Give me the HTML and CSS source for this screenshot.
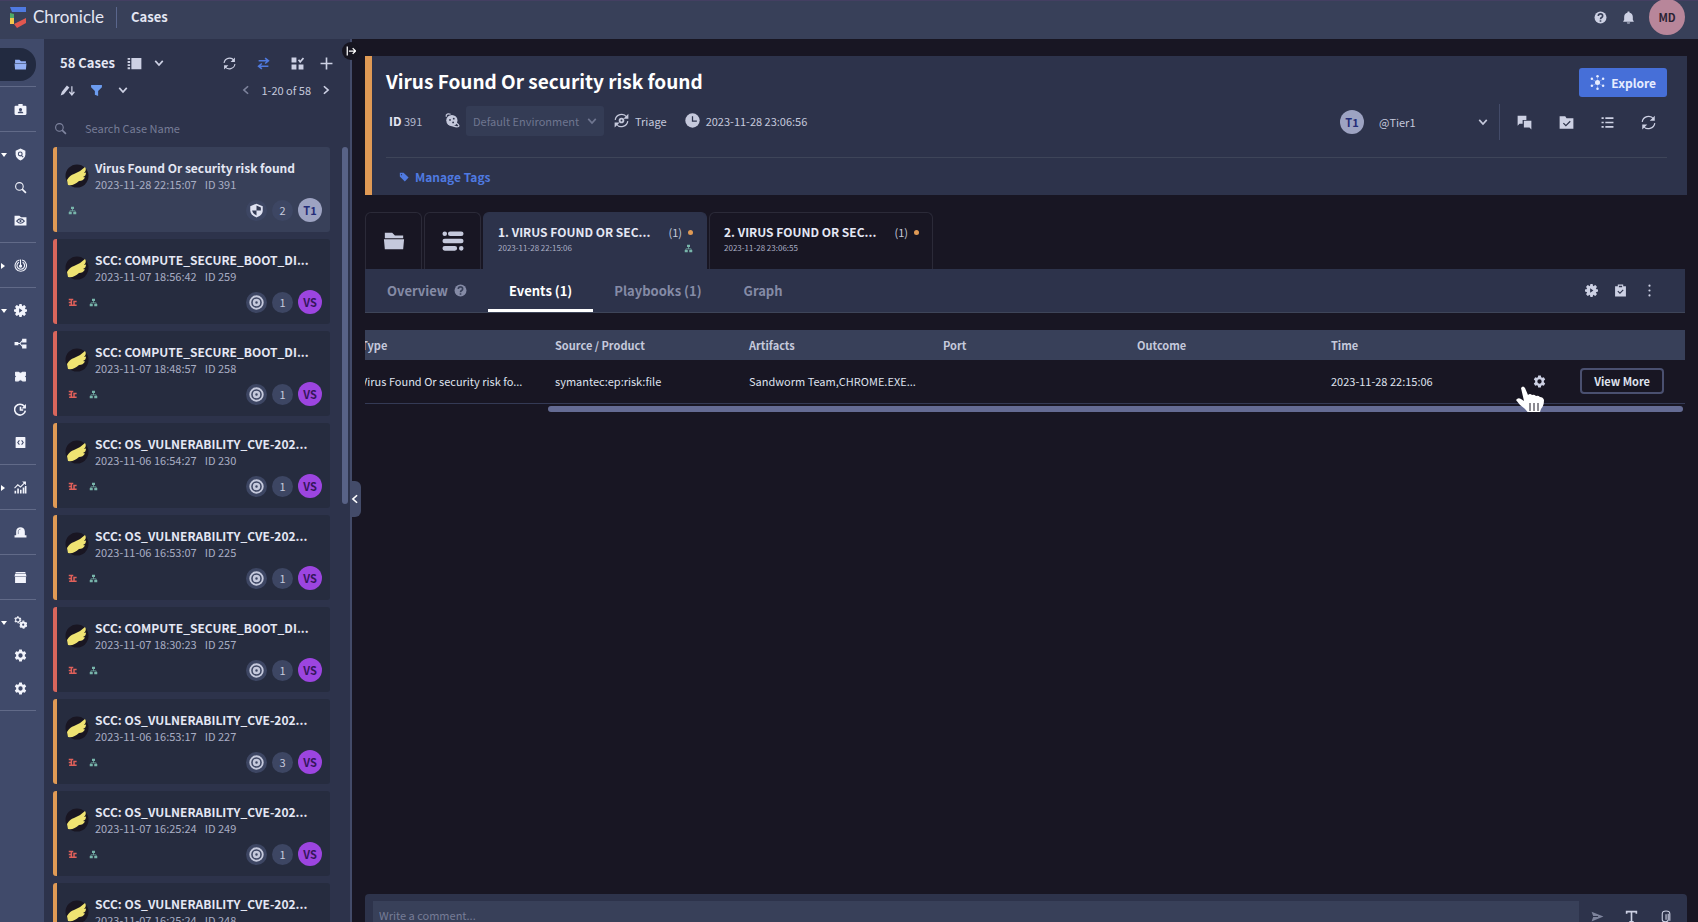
FILE: index.html
```html
<!DOCTYPE html>
<html lang="en">
<head>
    <meta charset="utf-8">
    <title>Chronicle - Cases</title>
    <link rel="stylesheet" href="styles.css">
</head>
<body>
    <svg class="sprite" aria-hidden="true">
        <symbol id="folder" viewBox="0 0 24 24"><path d="M2 3h8l3 3h9v3H2zM1 10h22l-1 11H2z" fill="currentColor"/></symbol>
        <symbol id="badge" viewBox="0 0 24 24"><path d="M8 2h8v3h5a2 2 0 0 1 2 2v13a2 2 0 0 1-2 2H3a2 2 0 0 1-2-2V7a2 2 0 0 1 2-2h5zm4 7a3 3 0 0 0 0 6 3 3 0 0 0 0-6zm-5 9v1h10v-1c0-3-10-3-10 0z" fill="currentColor" fill-rule="evenodd"/></symbol>
        <symbol id="shield-search" viewBox="0 0 24 24"><path d="M12 1l9 4v7c0 5-4 9-9 11-5-2-9-6-9-11V5z" fill="currentColor"/><circle cx="11.500" cy="11" r="3.500" fill="none" stroke="#404a6a" stroke-width="2"/><path d="M14 14l3 3" stroke="#404a6a" stroke-width="2"/></symbol>
        <symbol id="search" viewBox="0 0 24 24"><circle cx="10" cy="10" r="7" fill="none" stroke="currentColor" stroke-width="2"/><path d="M15 15l7 7" stroke="currentColor" stroke-width="3"/></symbol>
        <symbol id="folder-eye" viewBox="0 0 24 24"><path d="M1 3h9l3 3h10v15H1z" fill="currentColor"/><path d="M5 13q7-8 14 0q-7 8-14 0z" fill="none" stroke="#404a6a" stroke-width="2"/><circle cx="12" cy="13" r="2" fill="#404a6a"/></symbol>
        <symbol id="radar" viewBox="0 0 24 24"><g fill="none" stroke="currentColor" stroke-width="2"><path d="M15 2a10.500 10.500 0 1 1-5 0M16 6a7 7 0 1 1-7 0M12 1v12"/></g><circle cx="12" cy="13" r="3" fill="currentColor"/></symbol>
        <symbol id="gear" viewBox="0 0 24 24"><path d="M9.500 1h5l.5 3 2 1.200 3-1.200 2.500 4.500L20 10.500v3l2.500 2L20 20l-3-1.200-2 1.200-.5 3h-5L9 20l-2-1.200L4 20l-2.500-4.500 2.500-2v-3l-2.500-2L4 4l3 1.200L9 4zM12 8a4 4 0 0 0 0 8 4 4 0 0 0 0-8z" fill="currentColor" fill-rule="evenodd"/></symbol>
        <symbol id="gear-play" viewBox="0 0 24 24"><path d="M10 0h4l1 4 4-2 3 3-2 4 4 1v4l-4 1 2 4-3 3-4-2-1 4h-4l-1-4-4 2-3-3 2-4-4-1v-4l4-1-2-4 3-3 4 2zM9.500 8v8l6-4z" fill="currentColor" fill-rule="evenodd"/></symbol>
        <symbol id="share" viewBox="0 0 24 24"><path d="M5 12h6l5-6M11 12l5 6" fill="none" stroke="currentColor" stroke-width="2"/><path d="M1 9h7v6H1zM15 3h8v7h-8zM15 14h8v7h-8z" fill="currentColor"/></symbol>
        <symbol id="puzzle" viewBox="0 0 24 24"><path d="M3 4h5q4 4 8 0h5v6q-3 2 0 4v6h-5q-4-4-8 0H3v-6q3-2 0-4z" fill="currentColor" stroke="currentColor" stroke-width="2" stroke-linejoin="round"/></symbol>
        <symbol id="clock-redo" viewBox="0 0 24 24"><path d="M19 6a10 10 0 1 0 2 8M12 7v6h5" fill="none" stroke="currentColor" stroke-width="3"/><path d="M22 2v8h-8z" fill="currentColor"/></symbol>
        <symbol id="code" viewBox="0 0 24 24"><path d="M4 2h16a1 1 0 0 1 1 1v18a1 1 0 0 1-1 1H4a1 1 0 0 1-1-1V3a1 1 0 0 1 1-1z" fill="currentColor"/><path d="M10 8l-3 4 3 4M14 8l3 4-3 4" fill="none" stroke="#404a6a" stroke-width="2"/></symbol>
        <symbol id="chart" viewBox="0 0 24 24"><path d="M1 13l6-6 5 4 9-9" fill="none" stroke="currentColor" stroke-width="2"/><path d="M15 1h7v7zM1 18h3v5H1zM6 14h3v9H6zM11 16h3v7h-3zM16 12h3v11h-3zM20 9h3v14h-3z" fill="currentColor"/></symbol>
        <symbol id="alarm" viewBox="0 0 24 24"><path d="M4 17v-7c0-10 16-10 16 0v7h3v4H1v-4z" fill="currentColor"/><path d="M8 15v-5c0-3 2-4 4-4" fill="none" stroke="#404a6a" stroke-width="1"/></symbol>
        <symbol id="store" viewBox="0 0 24 24"><path d="M3 2h18v2H3zM2 5h20l1 5H1zM2 11h20v11H2z" fill="currentColor"/></symbol>
        <symbol id="gears" viewBox="0 0 24 24"><g fill="none" stroke="currentColor"><circle cx="7" cy="7" r="4" stroke-width="2"/><circle cx="7" cy="7" r="5.500" stroke-width="2" stroke-dasharray="3 3"/><circle cx="17" cy="16" r="4" stroke-width="4"/><circle cx="17" cy="16" r="6.500" stroke-width="2" stroke-dasharray="4 3"/></g></symbol>
        <symbol id="list" viewBox="0 0 24 24"><path d="M7 3h16v18H7zM1 3h4v3H1zM1 8h4v3H1zM1 13h4v3H1zM1 18h4v3H1z" fill="currentColor"/></symbol>
        <symbol id="chevron" viewBox="0 0 24 24"><path d="M3 7l9 10 9-10" fill="none" stroke="currentColor" stroke-width="4"/></symbol>
        <symbol id="chevron-left" viewBox="0 0 24 24"><path d="M17 3L7 12l10 9" fill="none" stroke="currentColor" stroke-width="4"/></symbol>
        <symbol id="chevron-right" viewBox="0 0 24 24"><path d="M7 3l10 9-10 9" fill="none" stroke="currentColor" stroke-width="4"/></symbol>
        <symbol id="refresh" viewBox="0 0 24 24"><path d="M2 11C3 2 15-1 20 6M22 13c-1 9-13 12-18 5" fill="none" stroke="currentColor" stroke-width="2"/><path d="M22 1v8h-8zM2 23v-8h8z" fill="currentColor"/></symbol>
        <symbol id="swap" viewBox="0 0 24 24"><path d="M3 7h17M15 2l6 5-6 5M21 17H4M9 12l-6 5 6 5" fill="none" stroke="currentColor" stroke-width="3"/></symbol>
        <symbol id="grid-check" viewBox="0 0 24 24"><path d="M1 1h9v9H1zM1 14h9v9H1zM14 14h9v9h-9z" fill="currentColor"/><path d="M14 5l3 4 6-7" fill="none" stroke="currentColor" stroke-width="3"/></symbol>
        <symbol id="plus" viewBox="0 0 24 24"><path d="M12 1v22M1 12h22" stroke="currentColor" stroke-width="3"/></symbol>
        <symbol id="sort" viewBox="0 0 24 24"><path d="M1 20l2-6L11 4l4 3-9 11z" fill="currentColor"/><path d="M19 5v13M15 14l4 5 4-5" fill="none" stroke="currentColor" stroke-width="2"/></symbol>
        <symbol id="filter" viewBox="0 0 24 24"><path d="M2 2h20v4l-7 7v9l-6-2v-7L2 6z" fill="currentColor"/></symbol>
        <symbol id="wing" viewBox="0 0 24 24"><circle cx="12" cy="12" r="11.500" fill="#191622"/><path d="M3 21L2 16Q5 11 9 10Q15 8 20 3Q22 6 19 9L21 8.500Q21 12 18 13L20 13.500Q18 17 14 17Q9 22 3 21z" fill="#efe372"/></symbol>
        <symbol id="nodes" viewBox="0 0 24 24"><path d="M8 2h8v6H8zM2 16h8v6H2zM14 16h8v6h-8z" fill="currentColor"/><path d="M12 8v5M5 17v-4h14v4" fill="none" stroke="currentColor" stroke-width="2"/></symbol>
        <symbol id="red-tag" viewBox="0 0 24 24"><path d="M2 4h12M9 4v15M2 12h8M3 19h11M23 9h-7v10h7" fill="none" stroke="currentColor" stroke-width="4"/></symbol>
        <symbol id="shield-quarter" viewBox="0 0 24 24"><path d="M12 1l10 4v7c0 5-4 9-10 11C6 21 2 17 2 12V5z" fill="#dfe2f2"/><path d="M12 4v8h7V7zM12 12v8c-4-2-6-4-7-8z" fill="#343b55"/></symbol>
        <symbol id="target" viewBox="0 0 24 24"><g fill="none" stroke="currentColor"><circle cx="12" cy="12" r="10" stroke-width="3"/><circle cx="12" cy="12" r="4" stroke-width="4"/></g></symbol>
        <symbol id="help" viewBox="0 0 24 24"><circle cx="12" cy="12" r="11" fill="currentColor"/><path d="M8 9c0-5 8-5 8 0 0 3-4 3-4 6M12 17v3" fill="none" stroke="#384059" stroke-width="3"/></symbol>
        <symbol id="bell" viewBox="0 0 24 24"><path d="M12 1c2 0 2 1 2 2 4 1 6 4 6 8v5l2 4H2l2-4v-5c0-4 2-7 6-8 0-1 0-2 2-2zM9 21h6c0 3-6 3-6 0z" fill="currentColor"/></symbol>
        <symbol id="planet" viewBox="0 0 24 24"><circle cx="11" cy="12" r="9" fill="currentColor"/><path d="M2 6C1 1 5 1 9 2M18 16c5 3 6 6 1 6-3 0-5-1-8-2" fill="none" stroke="currentColor" stroke-width="2"/><circle cx="8" cy="11" r="1.500" fill="#2d334b"/><circle cx="14" cy="9" r="1.500" fill="#2d334b"/><circle cx="13" cy="15" r="1.500" fill="#2d334b"/></symbol>
        <symbol id="triage" viewBox="0 0 24 24"><path d="M2 11C3 2 15-1 20 6M22 13c-1 9-13 12-18 5" fill="none" stroke="currentColor" stroke-width="2"/><path d="M23 1v8h-8zM1 23v-8h8z" fill="currentColor"/><circle cx="12" cy="12" r="3" fill="none" stroke="currentColor" stroke-width="3"/></symbol>
        <symbol id="clock" viewBox="0 0 24 24"><circle cx="12" cy="12" r="11.500" fill="currentColor"/><path d="M12 5v8h7" fill="none" stroke="#2d334b" stroke-width="2"/></symbol>
        <symbol id="tag" viewBox="0 0 24 24"><path d="M2 2h9l12 11-9 10L2 11zM6 5a1.500 1.500 0 0 0 0 3 1.500 1.500 0 0 0 0-3z" fill="currentColor" fill-rule="evenodd"/></symbol>
        <symbol id="explore" viewBox="0 0 24 24"><g fill="currentColor"><circle cx="12" cy="12" r="4"/><circle cx="12" cy="2" r="2"/><circle cx="12" cy="22" r="2"/><circle cx="3" cy="6" r="2"/><circle cx="21" cy="6" r="2"/><circle cx="3" cy="17" r="2"/><circle cx="21" cy="17" r="2"/></g><path d="M12 3v18M4 7l16 10M20 7L4 17" stroke="currentColor" stroke-width="1" opacity=".5"/></symbol>
        <symbol id="chat" viewBox="0 0 24 24"><path d="M1 1h14v7H9v6H4l-3 3zM11 9h12v14l-3-3h-9z" fill="currentColor"/></symbol>
        <symbol id="folder-check" viewBox="0 0 24 24"><path d="M1 2h9l2 3h11v17H1z" fill="currentColor"/><path d="M7 13l4 4 7-7" fill="none" stroke="#2d334b" stroke-width="2"/></symbol>
        <symbol id="lines" viewBox="0 0 24 24"><path d="M1 4h4M8 4h15M1 12h4M8 12h15M1 20h4M8 20h15" stroke="currentColor" stroke-width="3"/></symbol>
        <symbol id="bars" viewBox="0 0 24 24"><path d="M3 4h0M9 4h12M3 12h18M3 20h11M21 20h0" stroke="currentColor" stroke-width="5" stroke-linecap="round"/></symbol>
        <symbol id="clipboard" viewBox="0 0 24 24"><path d="M2 4h5V1h10v3h5v19H2zM9 3v3h6V3z" fill="currentColor" fill-rule="evenodd"/><path d="M7 13l4 4 6-6" fill="none" stroke="#2d334b" stroke-width="2"/></symbol>
        <symbol id="dots" viewBox="0 0 24 24"><g fill="currentColor"><circle cx="12" cy="3" r="2"/><circle cx="12" cy="12" r="2"/><circle cx="12" cy="21" r="2"/></g></symbol>
        <symbol id="expand" viewBox="0 0 24 24"><path d="M3 1v22M7 12h15M16 5l7 7-7 7" fill="none" stroke="currentColor" stroke-width="3"/></symbol>
        <symbol id="send" viewBox="0 0 24 24"><path d="M1 3l22 9-22 9 3-8h9v-2H4z" fill="currentColor"/></symbol>
        <symbol id="text-format" viewBox="0 0 24 24"><path d="M3 7V3h18v4M12 3v19M8 22h8" fill="none" stroke="currentColor" stroke-width="3"/></symbol>
        <symbol id="clip" viewBox="0 0 24 24"><path d="M17 7v11c0 5-11 5-11 0V7c0-7 14-7 14 0v13M13 8v10" fill="none" stroke="currentColor" stroke-width="2"/></symbol>
    </svg>

    <header class="topbar">
        <a class="logo" href="#">
            <svg class="logo-mark" viewBox="0 0 18 21" aria-hidden="true">
                <path d="M1 0h16v5H3z" fill="#4f7ae0"/>
                <path d="M1 6l4 1v5H1z" fill="#4fa868"/>
                <path d="M1 11h4v6H1z" fill="#f2c84b"/>
                <path d="M5 17l12-6v5l-9 5z" fill="#e0574f"/>
            </svg>
            <span>Chronicle</span>
        </a>
        <span class="topbar-page">Cases</span>
        <button class="icon-button topbar-help" aria-label="Help"><svg class="icon-m"><use href="#help"/></svg></button>
        <button class="icon-button topbar-bell" aria-label="Notifications"><svg class="icon-m"><use href="#bell"/></svg></button>
        <button class="avatar-main">MD</button>
    </header>

    <div class="layout">
        <nav class="nav" aria-label="Main">
            <div class="nav-group">
                <a class="nav-item active" href="#" aria-label="Cases"><svg><use href="#folder"/></svg></a>
            </div>
            <div class="nav-group">
                <a class="nav-item" href="#" aria-label="Workdesk"><svg><use href="#badge"/></svg></a>
            </div>
            <div class="nav-group">
                <a class="nav-item open" href="#" aria-label="Investigation"><svg><use href="#shield-search"/></svg></a>
                <a class="nav-item" href="#" aria-label="Search"><svg><use href="#search"/></svg></a>
                <a class="nav-item" href="#" aria-label="Views"><svg><use href="#folder-eye"/></svg></a>
            </div>
            <div class="nav-group">
                <a class="nav-item closed" href="#" aria-label="Detection"><svg><use href="#radar"/></svg></a>
            </div>
            <div class="nav-group">
                <a class="nav-item open" href="#" aria-label="Response"><svg><use href="#gear-play"/></svg></a>
                <a class="nav-item" href="#" aria-label="Playbooks"><svg><use href="#share"/></svg></a>
                <a class="nav-item" href="#" aria-label="Integrations"><svg><use href="#puzzle"/></svg></a>
                <a class="nav-item" href="#" aria-label="Jobs"><svg><use href="#clock-redo"/></svg></a>
                <a class="nav-item" href="#" aria-label="IDE"><svg><use href="#code"/></svg></a>
            </div>
            <div class="nav-group">
                <a class="nav-item closed" href="#" aria-label="Dashboards"><svg><use href="#chart"/></svg></a>
            </div>
            <div class="nav-group">
                <a class="nav-item" href="#" aria-label="Incidents"><svg><use href="#alarm"/></svg></a>
            </div>
            <div class="nav-group">
                <a class="nav-item" href="#" aria-label="Marketplace"><svg><use href="#store"/></svg></a>
            </div>
            <div class="nav-group">
                <a class="nav-item open" href="#" aria-label="Settings"><svg><use href="#gears"/></svg></a>
                <a class="nav-item" href="#" aria-label="SIEM settings"><svg><use href="#gear"/></svg></a>
                <a class="nav-item" href="#" aria-label="SOAR settings"><svg><use href="#gear"/></svg></a>
            </div>
        </nav>

        <aside class="cases">
            <div class="cases-toolbar">
                <span class="cases-count">58 Cases</span>
                <button class="icon-button" aria-label="List view"><svg class="icon-l"><use href="#list"/></svg></button>
                <button class="icon-button" aria-label="View options"><svg class="icon-s"><use href="#chevron"/></svg></button>
                <div class="toolbar-right">
                    <button class="icon-button" aria-label="Refresh"><svg class="icon-m"><use href="#refresh"/></svg></button>
                    <button class="icon-button blue" aria-label="Switch"><svg class="icon-m"><use href="#swap"/></svg></button>
                    <button class="icon-button" aria-label="Select cases"><svg class="icon-m"><use href="#grid-check"/></svg></button>
                    <button class="icon-button add-case" aria-label="Add case"><svg class="icon-m"><use href="#plus"/></svg></button>
                </div>
            </div>
            <div class="cases-filter">
                <button class="icon-button" aria-label="Sort"><svg class="icon-l"><use href="#sort"/></svg></button>
                <button class="icon-button light-blue" aria-label="Filter"><svg class="icon-m"><use href="#filter"/></svg></button>
                <button class="icon-button" aria-label="Filter options"><svg class="icon-s"><use href="#chevron"/></svg></button>
                <div class="pager">
                    <button class="icon-button dim" aria-label="Previous page"><svg class="icon-s"><use href="#chevron-left"/></svg></button>
                    <span>1-20 of 58</span>
                    <button class="icon-button" aria-label="Next page"><svg class="icon-s"><use href="#chevron-right"/></svg></button>
                </div>
            </div>
            <label class="cases-search">
                <svg class="icon-m"><use href="#search"/></svg>
                <input type="text" placeholder="Search Case Name" aria-label="Search Case Name">
            </label>
            <div class="cases-body">
                <div id="caseList" class="case-list"></div>
                <div class="scroll-thumb"></div>
            </div>
            <button class="expand-button" aria-label="Expand"><svg class="icon-s"><use href="#expand"/></svg></button>
            <button class="collapse-button" aria-label="Collapse"><svg class="icon-s"><use href="#chevron-left"/></svg></button>
        </aside>

        <main class="main">
            <section class="case-header">
                <div class="case-top">
                    <h1 class="case-heading">Virus Found Or security risk found</h1>
                    <button class="explore-button"><svg class="icon-l"><use href="#explore"/></svg>Explore</button>
                </div>
                <div class="case-info">
                    <span class="case-id"><b>ID</b> 391</span>
                    <svg class="icon-l"><use href="#planet"/></svg>
                    <span class="environment">
                        <select aria-label="Environment" disabled><option>Default Environment</option></select>
                        <svg class="icon-s"><use href="#chevron"/></svg>
                    </span>
                    <span class="info-item"><svg class="icon-l"><use href="#triage"/></svg>Triage</span>
                    <span class="info-item"><svg class="icon-l"><use href="#clock"/></svg>2023-11-28 23:06:56</span>
                    <div class="case-actions">
                        <span class="circle tier">T1</span>
                        <span class="assignee">
                            <select aria-label="Assignee"><option>@Tier1</option></select>
                            <svg class="icon-s"><use href="#chevron"/></svg>
                        </span>
                        <button class="icon-button" aria-label="Chat"><svg class="icon-l"><use href="#chat"/></svg></button>
                        <button class="icon-button" aria-label="Close case"><svg class="icon-l"><use href="#folder-check"/></svg></button>
                        <button class="icon-button" aria-label="Case menu"><svg class="icon-m"><use href="#lines"/></svg></button>
                        <button class="icon-button" aria-label="Refresh case"><svg class="icon-l"><use href="#refresh"/></svg></button>
                    </div>
                </div>
                <div class="case-tags">
                    <button class="tags-button"><svg class="icon-s"><use href="#tag"/></svg>Manage Tags</button>
                </div>
            </section>

            <div class="content">
                <div class="alert-tabs">
                    <button class="alert-tab icon-tab" aria-label="Case overview"><svg><use href="#folder"/></svg></button>
                    <button class="alert-tab icon-tab" aria-label="Case wall"><svg><use href="#bars"/></svg></button>
                    <button class="alert-tab active">
                        <span class="alert-line"><span class="alert-name">1. VIRUS FOUND OR SEC...</span><span class="alert-count">(1)</span><i class="dot"></i></span>
                        <span class="alert-line"><span class="alert-date">2023-11-28 22:15:06</span><svg class="node-icon"><use href="#nodes"/></svg></span>
                    </button>
                    <button class="alert-tab">
                        <span class="alert-line"><span class="alert-name">2. VIRUS FOUND OR SEC...</span><span class="alert-count">(1)</span><i class="dot"></i></span>
                        <span class="alert-line"><span class="alert-date">2023-11-28 23:06:55</span></span>
                    </button>
                </div>

                <div class="view-tabs">
                    <a class="view-tab" href="#">Overview <svg class="icon-m"><use href="#help"/></svg></a>
                    <a class="view-tab active" href="#">Events (1)</a>
                    <a class="view-tab" href="#">Playbooks (1)</a>
                    <a class="view-tab" href="#">Graph</a>
                    <div class="view-actions">
                        <button class="icon-button" aria-label="Run action"><svg class="icon-m"><use href="#gear-play"/></svg></button>
                        <button class="icon-button" aria-label="Tasks"><svg class="icon-m"><use href="#clipboard"/></svg></button>
                        <button class="icon-button" aria-label="More"><svg class="icon-m"><use href="#dots"/></svg></button>
                    </div>
                </div>

                <div class="table-wrap">
                    <table class="events">
                        <thead>
                            <tr>
                                <th>Type</th>
                                <th>Source / Product</th>
                                <th>Artifacts</th>
                                <th>Port</th>
                                <th>Outcome</th>
                                <th>Time</th>
                                <th class="col-actions"></th>
                            </tr>
                        </thead>
                        <tbody>
                            <tr>
                                <td>Virus Found Or security risk fo...</td>
                                <td>symantec:ep:risk:file</td>
                                <td>Sandworm Team,CHROME.EXE...</td>
                                <td></td>
                                <td></td>
                                <td>2023-11-28 22:15:06</td>
                                <td class="col-actions">
                                    <div class="row-actions">
                                        <button class="icon-button" aria-label="Configure"><svg class="icon-m"><use href="#gear"/></svg></button>
                                        <button class="view-button">View More</button>
                                        <svg class="pointer" viewBox="0 0 28 30" aria-hidden="true"><path d="M5 2q2-3 4 0l3 7q2-2 4 0 2-1 4 1 2-1 4 1 3 0 4 3 0 6-3 9l-2 6H13c-1-4-6-8-9-10l-4-5q2-3 5-1l3 2z" fill="#fff"/><path d="M14 17v8M18 17v8M22 17v8" stroke="#191622" stroke-width="1"/></svg>
                                    </div>
                                </td>
                            </tr>
                        </tbody>
                    </table>
                    <div class="table-scroll"></div>
                </div>
            </div>

            <div class="comment-bar">
                <input type="text" placeholder="Write a comment..." aria-label="Write a comment">
                <button class="icon-button dim" aria-label="Send"><svg class="icon-m"><use href="#send"/></svg></button>
                <button class="icon-button" aria-label="Text format"><svg class="icon-m"><use href="#text-format"/></svg></button>
                <button class="icon-button" aria-label="Attach file"><svg class="icon-m"><use href="#clip"/></svg></button>
            </div>
        </main>
    </div>

    <script>
        const cases = [
            { title: "Virus Found Or security risk found", date: "2023-11-28 22:15:07", id: 391, level: "medium", alerts: 2, owner: "T1", selected: true },
            { title: "SCC: COMPUTE_SECURE_BOOT_DI...", date: "2023-11-07 18:56:42", id: 259, level: "high", alerts: 1, owner: "VS" },
            { title: "SCC: COMPUTE_SECURE_BOOT_DI...", date: "2023-11-07 18:48:57", id: 258, level: "high", alerts: 1, owner: "VS" },
            { title: "SCC: OS_VULNERABILITY_CVE-202...", date: "2023-11-06 16:54:27", id: 230, level: "medium", alerts: 1, owner: "VS" },
            { title: "SCC: OS_VULNERABILITY_CVE-202...", date: "2023-11-06 16:53:07", id: 225, level: "medium", alerts: 1, owner: "VS" },
            { title: "SCC: COMPUTE_SECURE_BOOT_DI...", date: "2023-11-07 18:30:23", id: 257, level: "high", alerts: 1, owner: "VS" },
            { title: "SCC: OS_VULNERABILITY_CVE-202...", date: "2023-11-06 16:53:17", id: 227, level: "medium", alerts: 3, owner: "VS" },
            { title: "SCC: OS_VULNERABILITY_CVE-202...", date: "2023-11-07 16:25:24", id: 249, level: "medium", alerts: 1, owner: "VS" },
            { title: "SCC: OS_VULNERABILITY_CVE-202...", date: "2023-11-07 16:25:24", id: 248, level: "medium", alerts: 1, owner: "VS" }
        ];

        function createCard(item) {
            const card = document.createElement("article");
            card.className = "case-card " + item.level + (item.selected ? " selected" : "");
            card.innerHTML = `
                <div class="card-top">
                    <svg class="wing"><use href="#wing"/></svg>
                    <div>
                        <h2 class="card-title">${item.title}</h2>
                        <p class="card-date">${item.date}<span>ID ${item.id}</span></p>
                    </div>
                </div>
                <div class="card-bottom">
                    ${item.selected ? "" : '<svg class="tag-icon"><use href="#red-tag"/></svg>'}
                    <svg class="node-icon"><use href="#nodes"/></svg>
                    <div class="card-circles">
                        <span class="circle"><svg class="icon-l"><use href="#${item.selected ? "shield-quarter" : "target"}"/></svg></span>
                        <span class="circle">${item.alerts}</span>
                        <span class="circle ${item.selected ? "tier" : "owner"}">${item.owner}</span>
                    </div>
                </div>`;
            return card;
        }

        const caseList = document.getElementById("caseList");
        cases.forEach(item => caseList.appendChild(createCard(item)));
    </script>
</body>
</html>
```

FILE: styles.css
```css
* {
    box-sizing: border-box;
}

body {
    margin: 0;
    height: 100vh;
    overflow: hidden;
    display: flex;
    flex-direction: column;
    background-color: #181623;
    color: #c5c9dc;
    font-family: "Noto Sans CJK SC", "Open Sans", sans-serif;
    font-size: 11px;
    line-height: 16px;
}

h1, h2, p {
    margin: 0;
}

button, input, select {
    font: inherit;
    color: inherit;
    background: none;
    border: none;
    padding: 0;
}

button {
    cursor: pointer;
}

a {
    color: inherit;
    text-decoration: none;
}

svg {
    display: block;
    flex: none;
}

.sprite {
    position: absolute;
    width: 0;
    height: 0;
}

.icon-s {
    width: 10px;
    height: 10px;
}

.icon-m {
    width: 13px;
    height: 13px;
}

.icon-l {
    width: 15px;
    height: 15px;
}

.icon-button {
    display: flex;
    color: #cdd1e4;
}

.blue {
    color: #4f7ae0;
}

.light-blue {
    color: #6c9cf0;
}

.dim {
    color: #7d839c;
}

/* top bar */
.topbar {
    flex: none;
    height: 39px;
    display: flex;
    align-items: center;
    padding: 0 10px 6px 9px;
    background-color: #384059;
    border-top: 1px solid #443f62;
}

.logo {
    display: flex;
    align-items: center;
    gap: 6px;
    padding-right: 12px;
    border-right: 1px solid #5a668c;
    font-family: Lato, sans-serif;
    font-size: 17px;
    color: #e4e7f4;
}

.logo-mark {
    width: 18px;
    height: 21px;
}

.topbar-page {
    padding-left: 14px;
    font-size: 13px;
    font-weight: bold;
    color: #e4e7f4;
}

.topbar-help {
    margin: 0 15px 0 auto;
}

.topbar-bell {
    margin: 0 14px 0 0;
}

.avatar-main {
    flex: none;
    width: 36px;
    height: 36px;
    margin-right: 3px;
    border-radius: 50%;
    background-color: #b8869a;
    color: #2a2233;
    font-weight: bold;
}

.layout {
    flex: 1;
    min-height: 0;
    display: flex;
}

/* navigation */
.nav {
    flex: none;
    width: 44px;
    padding-top: 3px;
    background-color: #404a6a;
    color: #f2f4fc;
}

.nav-group {
    width: 36px;
    padding: 6px 0 5px;
    border-bottom: 1px solid #616a88;
}

.nav-item {
    display: flex;
    align-items: center;
    height: 33px;
    padding-left: 14px;
    border-radius: 0 16px 16px 0;
}

.nav-item svg {
    width: 13px;
    height: 13px;
}

.nav-item.active {
    background-color: #222a40;
    color: #94b0f4;
}

.nav-item.open::before,
.nav-item.closed::before {
    content: "";
    width: 0;
    height: 0;
    margin-left: -13px;
    border: 3px solid transparent;
    border-top: 4px solid #fff;
    border-bottom: 0;
    margin-right: 7px;
}

.nav-item.closed::before {
    border: 3px solid transparent;
    border-left: 4px solid #fff;
    border-right: 0;
    margin-right: 9px;
}

/* case list */
.cases {
    position: relative;
    flex: none;
    width: 308px;
    display: flex;
    flex-direction: column;
    padding-top: 12px;
    background-color: #2d334b;
    border-right: 2px solid #434b69;
}

.cases-toolbar,
.cases-filter {
    display: flex;
    align-items: center;
    height: 24px;
    padding: 0 17px 0 16px;
}

.cases-toolbar {
    gap: 12px;
}

.cases-count {
    font-size: 13px;
    font-weight: bold;
    color: #e4e7f4;
}

.toolbar-right {
    display: flex;
    gap: 21px;
    margin-left: auto;
}

.add-case {
    margin-left: -5px;
}

.cases-filter {
    gap: 15px;
    margin-top: 3px;
    padding-right: 19px;
}

.pager {
    display: flex;
    align-items: center;
    gap: 10px;
    margin-left: auto;
}

.cases-search {
    display: flex;
    align-items: center;
    gap: 18px;
    height: 30px;
    margin-top: 11px;
    padding-left: 10px;
    color: #8086a0;
}

.cases-search input {
    flex: 1;
}

input::placeholder {
    color: #767c96;
    opacity: 1;
}

.cases-body {
    flex: 1;
    min-height: 0;
    display: flex;
    justify-content: space-between;
    margin-top: 4px;
    padding: 0 2px 0 9px;
    overflow: hidden;
}

.case-list {
    flex: 1;
    display: flex;
    flex-direction: column;
    gap: 7px;
    margin-right: 12px;
}

.scroll-thumb {
    width: 6px;
    height: 46%;
    border-radius: 3px;
    background-color: #586286;
}

.case-card {
    flex: none;
    height: 85px;
    padding: 12px 8px 0;
    background-color: #262c3f;
    border-left: 4px solid #e09a55;
    border-radius: 3px;
}

.case-card.high {
    border-left-color: #d9665c;
}

.case-card.selected {
    background-color: #384059;
}

.card-top {
    display: flex;
    align-items: center;
    gap: 6px;
}

.wing {
    width: 24px;
    height: 24px;
}

.card-title {
    font-size: 12px;
    line-height: 17px;
    color: #e4e7f4;
    white-space: nowrap;
}

.card-date {
    color: #a9aec4;
}

.card-date span {
    margin-left: 8px;
}

.card-bottom {
    display: flex;
    align-items: center;
    gap: 12px;
    height: 24px;
    margin-top: 6px;
    padding-left: 3px;
}

.tag-icon,
.node-icon {
    width: 9px;
    height: 9px;
    color: #78b5ab;
}

.tag-icon {
    color: #e0605a;
}

.card-circles {
    display: flex;
    align-items: center;
    gap: 5px;
    margin-left: auto;
}

.circle {
    display: flex;
    align-items: center;
    justify-content: center;
    width: 21px;
    height: 21px;
    border-radius: 50%;
    background-color: #3d4663;
}

.circle.tier,
.circle.owner {
    width: 24px;
    height: 24px;
    font-weight: bold;
    background-color: #9da3c2;
    color: #232c78;
}

.circle.owner {
    background-color: #9c45e0;
    color: #35165c;
}

.expand-button {
    position: absolute;
    top: 3px;
    right: -10px;
    width: 18px;
    height: 18px;
    display: flex;
    align-items: center;
    justify-content: center;
    border-radius: 50%;
    background-color: #161520;
    color: #fff;
    z-index: 1;
}

.collapse-button {
    position: absolute;
    top: 50%;
    right: -11px;
    width: 11px;
    height: 36px;
    display: flex;
    align-items: center;
    border-radius: 0 6px 6px 0;
    background-color: #434b69;
    color: #fff;
}

/* main area */
.main {
    flex: 1;
    min-width: 0;
    display: flex;
    flex-direction: column;
    padding: 17px 11px 0 13px;
}

.case-header {
    padding: 12px 20px 0 14px;
    background-color: #2d334b;
    border-left: 7px solid #e09a55;
}

.case-top {
    display: flex;
    justify-content: space-between;
    height: 30px;
}

.case-heading {
    font-size: 19px;
    line-height: 26px;
    color: #fff;
}

.explore-button {
    display: flex;
    align-items: center;
    gap: 6px;
    height: 29px;
    padding: 0 11px;
    border-radius: 3px;
    background-color: #466fd8;
    color: #e6ecff;
    font-size: 12px;
    font-weight: bold;
}

.case-info {
    display: flex;
    align-items: center;
    height: 60px;
    padding: 0 0 14px 3px;
    border-bottom: 1px solid #3e4559;
}

.case-id {
    width: 56px;
    color: #b4b9ce;
}

.case-id b {
    font-size: 12px;
    color: #e4e7f4;
}

.environment {
    display: flex;
    align-items: center;
    height: 30px;
    margin: 0 10px 0 6px;
    padding: 0 7px;
    border-radius: 3px;
    background-color: #343c55;
    color: #6f7690;
}

select {
    appearance: none;
    opacity: 1;
    outline: none;
}

.environment select {
    width: 114px;
}

.info-item {
    display: flex;
    align-items: center;
    gap: 6px;
    margin-right: 18px;
}

.case-actions {
    display: flex;
    align-items: center;
    gap: 27px;
    margin-left: auto;
    padding: 3px 11px 0 0;
}

.case-actions .circle {
    margin-right: -12px;
}

.assignee {
    display: flex;
    align-items: center;
    height: 36px;
    margin-right: -10px;
    padding-right: 11px;
    border-right: 1px solid #434b69;
}

.assignee select {
    width: 99px;
}

.case-tags {
    height: 37px;
    display: flex;
    align-items: center;
    padding-left: 13px;
}

.tags-button {
    display: flex;
    align-items: center;
    gap: 6px;
    font-size: 12px;
    font-weight: bold;
    color: #4f7ae0;
}

.content {
    flex: 1;
    padding-right: 2px;
}

.alert-tabs {
    display: flex;
    gap: 2px;
    margin-top: 17px;
}

.alert-tab {
    width: 224px;
    height: 57px;
    padding: 11px 13px 0 14px;
    border: 1px solid #2b2a38;
    border-bottom: 0;
    border-radius: 6px 6px 0 0;
    text-align: left;
    display: flex;
    flex-direction: column;
}

.alert-tab.active {
    background-color: #2d334b;
    border-color: #2d334b;
}

.alert-tab.icon-tab {
    width: 57px;
    padding: 0;
    align-items: center;
    justify-content: center;
}

.icon-tab svg {
    width: 22px;
    height: 22px;
}

.alert-line {
    width: 100%;
    display: flex;
    align-items: center;
    gap: 6px;
}

.alert-name {
    flex: 1;
    font-size: 12px;
    font-weight: bold;
    color: #e4e7f4;
    white-space: nowrap;
}

.alert-date {
    flex: 1;
    font-size: 8px;
    color: #a9aec4;
}

.dot {
    width: 5px;
    height: 5px;
    border-radius: 50%;
    background-color: #e09a55;
}

.view-tabs {
    display: flex;
    height: 44px;
    padding-left: 1px;
    background-color: #2d334b;
    border-bottom: 1px solid #3e4559;
    font-size: 13px;
    font-weight: bold;
    color: #858ba6;
}

.view-tab {
    display: flex;
    align-items: center;
    gap: 6px;
    padding: 0 21px;
}

.view-tab.active {
    color: #fff;
    border-bottom: 3px solid #fff;
    padding-top: 3px;
}

.view-actions {
    display: flex;
    align-items: center;
    gap: 16px;
    margin-left: auto;
    padding-right: 29px;
}

.table-wrap {
    margin-top: 17px;
    overflow: hidden;
}

.events {
    width: calc(100% + 16px);
    margin-left: -16px;
    border-collapse: collapse;
    table-layout: fixed;
}

.events th,
.events td {
    width: 194px;
    padding: 0 12px;
    text-align: left;
    white-space: nowrap;
}

.events th {
    height: 30px;
    background-color: #384059;
}

.events td {
    height: 43px;
    border-bottom: 1px solid #343a55;
    color: #dfe2ee;
}

.events .col-actions {
    width: auto;
}

.row-actions {
    position: relative;
    display: flex;
    align-items: center;
    justify-content: flex-end;
    gap: 34px;
    padding-right: 9px;
}

.view-button {
    height: 26px;
    padding: 0 12px;
    border: 2px solid #4a5070;
    border-radius: 4px;
    font-weight: bold;
}

/* hand cursor over the row */
.pointer {
    position: absolute;
    left: -9px;
    top: 18px;
    width: 28px;
    height: 30px;
}

.table-scroll {
    width: 86%;
    height: 6px;
    margin: 2px 2px 0 auto;
    border-radius: 3px;
    background-color: #646b93;
}

.comment-bar {
    flex: none;
    display: flex;
    align-items: center;
    gap: 21px;
    height: 28px;
    padding: 7px 15px 0 8px;
    background-color: #2d334b;
    border-radius: 4px 4px 0 0;
}

.comment-bar input {
    flex: 1;
    height: 21px;
    margin-right: -9px;
    padding: 7px 6px 0;
    background-color: #384059;
}

.comment-bar .icon-button {
    padding-top: 10px;
}
```
